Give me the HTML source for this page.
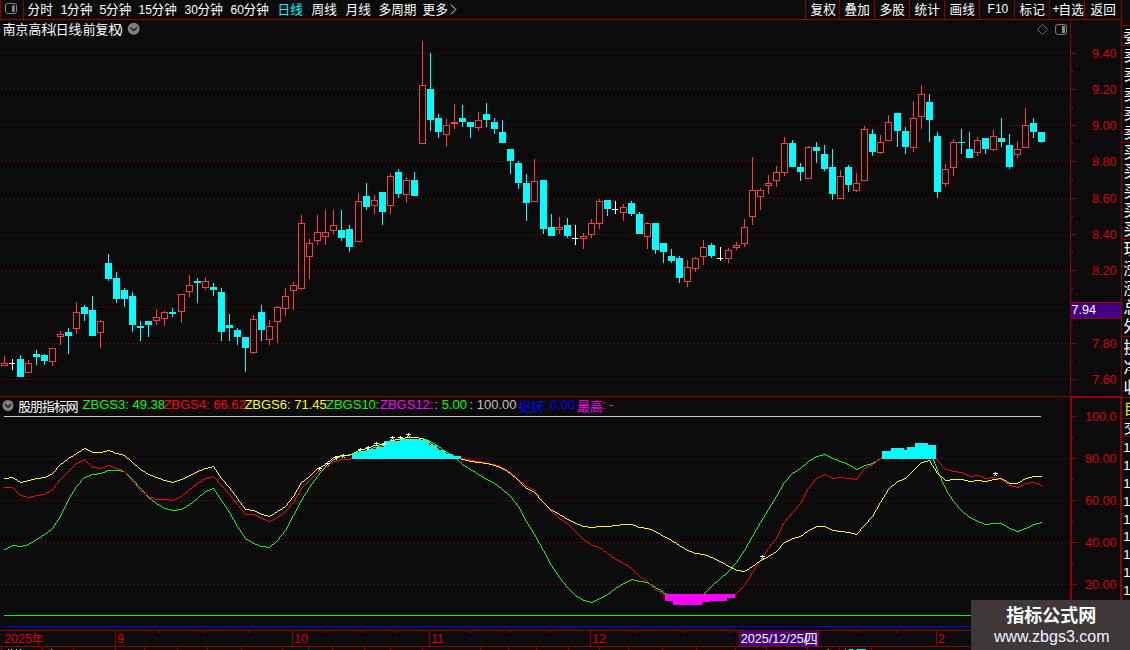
<!DOCTYPE html>
<html><head><meta charset="utf-8"><title>chart</title>
<style>
html,body{margin:0;padding:0;background:#0b0b0b;overflow:hidden}
body{width:1130px;height:650px;font-family:"Liberation Sans","Noto Sans CJK SC",sans-serif}
svg text{font-family:"Liberation Sans","Noto Sans CJK SC",sans-serif}
</style></head><body>
<svg width="1130" height="650" viewBox="0 0 1130 650" font-family="'Liberation Sans', 'Noto Sans CJK SC', sans-serif" style="display:block"><rect x="0" y="0" width="1130" height="650" fill="#0b0b0b"/>
<rect x="0" y="0" width="1" height="20" fill="#900000"/>
<rect x="0" y="19" width="1122" height="1" fill="#900000"/>
<rect x="23" y="0" width="1" height="20" fill="#900000"/>
<rect x="1070" y="20" width="1" height="630" fill="#900000"/>
<rect x="1121" y="0" width="1" height="650" fill="#900000"/>
<rect x="0" y="396" width="1122" height="1" fill="#900000"/>
<rect x="0" y="630" width="1122" height="1" fill="#900000"/>
<rect x="0" y="646" width="1122" height="1" fill="#900000"/>
<rect x="1070" y="396" width="52" height="2" fill="#900000"/>
<rect x="1070" y="396" width="2" height="235" fill="#900000"/>
<rect x="1120" y="396" width="2" height="235" fill="#900000"/>
<rect x="805" y="0" width="1" height="20" fill="#900000"/>
<rect x="839" y="0" width="1" height="20" fill="#900000"/>
<rect x="874" y="0" width="1" height="20" fill="#900000"/>
<rect x="909" y="0" width="1" height="20" fill="#900000"/>
<rect x="944" y="0" width="1" height="20" fill="#900000"/>
<rect x="979" y="0" width="1" height="20" fill="#900000"/>
<rect x="1014" y="0" width="1" height="20" fill="#900000"/>
<rect x="1049" y="0" width="1" height="20" fill="#900000"/>
<rect x="1084" y="0" width="1" height="20" fill="#900000"/>
<path d="M1 53.5H1066" stroke="#8c0000" stroke-width="1" stroke-dasharray="1 3" fill="none"/>
<path d="M1 89.5H1066" stroke="#8c0000" stroke-width="1" stroke-dasharray="1 3" fill="none"/>
<path d="M1 125.5H1066" stroke="#8c0000" stroke-width="1" stroke-dasharray="1 3" fill="none"/>
<path d="M1 161.5H1066" stroke="#8c0000" stroke-width="1" stroke-dasharray="1 3" fill="none"/>
<path d="M1 198.5H1066" stroke="#8c0000" stroke-width="1" stroke-dasharray="1 3" fill="none"/>
<path d="M1 234.5H1066" stroke="#8c0000" stroke-width="1" stroke-dasharray="1 3" fill="none"/>
<path d="M1 270.5H1066" stroke="#8c0000" stroke-width="1" stroke-dasharray="1 3" fill="none"/>
<path d="M1 307.5H1066" stroke="#8c0000" stroke-width="1" stroke-dasharray="1 3" fill="none"/>
<path d="M1 343.5H1066" stroke="#8c0000" stroke-width="1" stroke-dasharray="1 3" fill="none"/>
<path d="M1 379.5H1066" stroke="#8c0000" stroke-width="1" stroke-dasharray="1 3" fill="none"/>
<path d="M1 458.5H1066" stroke="#8c0000" stroke-width="1" stroke-dasharray="1 3" fill="none"/>
<path d="M1 500.5H1066" stroke="#8c0000" stroke-width="1" stroke-dasharray="1 3" fill="none"/>
<path d="M1 542.5H1066" stroke="#8c0000" stroke-width="1" stroke-dasharray="1 3" fill="none"/>
<path d="M1 584.5H1066" stroke="#8c0000" stroke-width="1" stroke-dasharray="1 3" fill="none"/>
<rect x="1071" y="53" width="5" height="1" fill="#900000"/>
<text x="1092" y="58.1" font-size="12.6" fill="#d80000">9.40</text>
<rect x="1071" y="89" width="5" height="1" fill="#900000"/>
<text x="1092" y="94.1" font-size="12.6" fill="#d80000">9.20</text>
<rect x="1071" y="125" width="5" height="1" fill="#900000"/>
<text x="1092" y="130.1" font-size="12.6" fill="#d80000">9.00</text>
<rect x="1071" y="161" width="5" height="1" fill="#900000"/>
<text x="1092" y="166.1" font-size="12.6" fill="#d80000">8.80</text>
<rect x="1071" y="198" width="5" height="1" fill="#900000"/>
<text x="1092" y="203.1" font-size="12.6" fill="#d80000">8.60</text>
<rect x="1071" y="234" width="5" height="1" fill="#900000"/>
<text x="1092" y="239.1" font-size="12.6" fill="#d80000">8.40</text>
<rect x="1071" y="270" width="5" height="1" fill="#900000"/>
<text x="1092" y="275.1" font-size="12.6" fill="#d80000">8.20</text>
<rect x="1071" y="307" width="5" height="1" fill="#900000"/>
<rect x="1071" y="343" width="5" height="1" fill="#900000"/>
<text x="1092" y="348.1" font-size="12.6" fill="#d80000">7.80</text>
<rect x="1071" y="379" width="5" height="1" fill="#900000"/>
<text x="1092" y="384.1" font-size="12.6" fill="#d80000">7.60</text>
<rect x="1071" y="71" width="2" height="1" fill="#900000"/>
<rect x="1071" y="107" width="2" height="1" fill="#900000"/>
<rect x="1071" y="143" width="2" height="1" fill="#900000"/>
<rect x="1071" y="179" width="2" height="1" fill="#900000"/>
<rect x="1071" y="216" width="2" height="1" fill="#900000"/>
<rect x="1071" y="252" width="2" height="1" fill="#900000"/>
<rect x="1071" y="288" width="2" height="1" fill="#900000"/>
<rect x="1071" y="325" width="2" height="1" fill="#900000"/>
<rect x="1071" y="361" width="2" height="1" fill="#900000"/>
<rect x="1072" y="416" width="5" height="1" fill="#900000"/>
<text x="1085" y="421.1" font-size="12.6" fill="#d80000">100.0</text>
<rect x="1072" y="458" width="5" height="1" fill="#900000"/>
<text x="1085" y="463.1" font-size="12.6" fill="#d80000">80.00</text>
<rect x="1072" y="500" width="5" height="1" fill="#900000"/>
<text x="1085" y="505.1" font-size="12.6" fill="#d80000">60.00</text>
<rect x="1072" y="542" width="5" height="1" fill="#900000"/>
<text x="1085" y="547.1" font-size="12.6" fill="#d80000">40.00</text>
<rect x="1072" y="584" width="5" height="1" fill="#900000"/>
<text x="1085" y="589.1" font-size="12.6" fill="#d80000">20.00</text>
<rect x="1072" y="437" width="2" height="1" fill="#900000"/>
<rect x="1072" y="479" width="2" height="1" fill="#900000"/>
<rect x="1072" y="521" width="2" height="1" fill="#900000"/>
<rect x="1072" y="563" width="2" height="1" fill="#900000"/>
<rect x="1072" y="605" width="2" height="1" fill="#900000"/>
<rect x="1071" y="302" width="50" height="1" fill="#900000"/>
<rect x="1071" y="318" width="50" height="1" fill="#900000"/>
<rect x="1071" y="303" width="50" height="15" fill="#440082"/>
<text x="1071.6" y="314.2" font-size="12.6" fill="#ffffff">7.94</text>
<g shape-rendering="crispEdges">
<rect x="4" y="356" width="1" height="7" fill="#ff3c3c"/>
<rect x="1.5" y="363.5" width="6" height="2" fill="none" stroke="#ff3c3c" stroke-width="1"/>
<rect x="12" y="359" width="1" height="11" fill="#ffffff"/>
<rect x="9" y="363" width="6" height="1" fill="#ffffff"/>
<rect x="20" y="355" width="1" height="4" fill="#00ffff"/>
<rect x="17" y="359" width="7" height="18" fill="#00ffff"/>
<rect x="28" y="360" width="1" height="3" fill="#ff3c3c"/>
<rect x="25.5" y="363.5" width="6" height="9" fill="none" stroke="#ff3c3c" stroke-width="1"/>
<rect x="36" y="350" width="1" height="4" fill="#00ffff"/>
<rect x="33" y="354" width="7" height="3" fill="#00ffff"/>
<rect x="36" y="357" width="1" height="8" fill="#00ffff"/>
<rect x="44" y="354" width="1" height="1" fill="#00ffff"/>
<rect x="41" y="355" width="7" height="6" fill="#00ffff"/>
<rect x="44" y="361" width="1" height="4" fill="#00ffff"/>
<rect x="52" y="362" width="1" height="4" fill="#ff3c3c"/>
<rect x="49.5" y="348.5" width="6" height="13" fill="none" stroke="#ff3c3c" stroke-width="1"/>
<rect x="60" y="331" width="1" height="3" fill="#ff3c3c"/>
<rect x="60" y="337" width="1" height="8" fill="#ff3c3c"/>
<rect x="57.5" y="334.5" width="6" height="2" fill="none" stroke="#ff3c3c" stroke-width="1"/>
<rect x="68" y="328" width="1" height="4" fill="#00ffff"/>
<rect x="65" y="332" width="7" height="4" fill="#00ffff"/>
<rect x="68" y="336" width="1" height="18" fill="#00ffff"/>
<rect x="76" y="302" width="1" height="10" fill="#ff3c3c"/>
<rect x="76" y="329" width="1" height="5" fill="#ff3c3c"/>
<rect x="73.5" y="312.5" width="6" height="16" fill="none" stroke="#ff3c3c" stroke-width="1"/>
<rect x="84" y="305" width="1" height="2" fill="#00ffff"/>
<rect x="81" y="307" width="7" height="7" fill="#00ffff"/>
<rect x="84" y="314" width="1" height="7" fill="#00ffff"/>
<rect x="92" y="296" width="1" height="14" fill="#00ffff"/>
<rect x="89" y="310" width="7" height="26" fill="#00ffff"/>
<rect x="100" y="320" width="1" height="1" fill="#ff3c3c"/>
<rect x="100" y="333" width="1" height="15" fill="#ff3c3c"/>
<rect x="97.5" y="321.5" width="6" height="11" fill="none" stroke="#ff3c3c" stroke-width="1"/>
<rect x="108" y="254" width="1" height="9" fill="#00ffff"/>
<rect x="105" y="263" width="7" height="16" fill="#00ffff"/>
<rect x="108" y="279" width="1" height="2" fill="#00ffff"/>
<rect x="116" y="272" width="1" height="6" fill="#00ffff"/>
<rect x="113" y="278" width="7" height="21" fill="#00ffff"/>
<rect x="116" y="299" width="1" height="4" fill="#00ffff"/>
<rect x="124" y="288" width="1" height="2" fill="#00ffff"/>
<rect x="121" y="290" width="7" height="9" fill="#00ffff"/>
<rect x="124" y="299" width="1" height="8" fill="#00ffff"/>
<rect x="132" y="292" width="1" height="4" fill="#00ffff"/>
<rect x="129" y="296" width="7" height="29" fill="#00ffff"/>
<rect x="132" y="325" width="1" height="7" fill="#00ffff"/>
<rect x="140" y="321" width="1" height="5" fill="#00ffff"/>
<rect x="137" y="326" width="7" height="2" fill="#00ffff"/>
<rect x="140" y="328" width="1" height="13" fill="#00ffff"/>
<rect x="145" y="321" width="7" height="4" fill="#00ffff"/>
<rect x="148" y="325" width="1" height="12" fill="#00ffff"/>
<rect x="156" y="309" width="1" height="8" fill="#ff3c3c"/>
<rect x="156" y="321" width="1" height="4" fill="#ff3c3c"/>
<rect x="153.5" y="317.5" width="6" height="3" fill="none" stroke="#ff3c3c" stroke-width="1"/>
<rect x="164" y="311" width="1" height="1" fill="#ff3c3c"/>
<rect x="164" y="319" width="1" height="7" fill="#ff3c3c"/>
<rect x="161.5" y="312.5" width="6" height="6" fill="none" stroke="#ff3c3c" stroke-width="1"/>
<rect x="172" y="308" width="1" height="4" fill="#00ffff"/>
<rect x="169" y="312" width="7" height="2" fill="#00ffff"/>
<rect x="172" y="314" width="1" height="3" fill="#00ffff"/>
<rect x="181" y="312" width="1" height="11" fill="#ff3c3c"/>
<rect x="178.5" y="294.5" width="6" height="17" fill="none" stroke="#ff3c3c" stroke-width="1"/>
<rect x="189" y="275" width="1" height="10" fill="#ff3c3c"/>
<rect x="189" y="292" width="1" height="5" fill="#ff3c3c"/>
<rect x="186.5" y="285.5" width="6" height="6" fill="none" stroke="#ff3c3c" stroke-width="1"/>
<rect x="197" y="278" width="1" height="3" fill="#00ffff"/>
<rect x="194" y="281" width="7" height="2" fill="#00ffff"/>
<rect x="197" y="283" width="1" height="20" fill="#00ffff"/>
<rect x="205" y="277" width="1" height="4" fill="#ff3c3c"/>
<rect x="205" y="288" width="1" height="2" fill="#ff3c3c"/>
<rect x="202.5" y="281.5" width="6" height="6" fill="none" stroke="#ff3c3c" stroke-width="1"/>
<rect x="213" y="283" width="1" height="4" fill="#00ffff"/>
<rect x="210" y="287" width="7" height="3" fill="#00ffff"/>
<rect x="213" y="290" width="1" height="6" fill="#00ffff"/>
<rect x="221" y="288" width="1" height="4" fill="#00ffff"/>
<rect x="218" y="292" width="7" height="40" fill="#00ffff"/>
<rect x="221" y="332" width="1" height="9" fill="#00ffff"/>
<rect x="229" y="314" width="1" height="11" fill="#00ffff"/>
<rect x="226" y="325" width="7" height="3" fill="#00ffff"/>
<rect x="229" y="328" width="1" height="13" fill="#00ffff"/>
<rect x="237" y="328" width="1" height="2" fill="#00ffff"/>
<rect x="234" y="330" width="7" height="7" fill="#00ffff"/>
<rect x="237" y="337" width="1" height="8" fill="#00ffff"/>
<rect x="242" y="337" width="7" height="11" fill="#00ffff"/>
<rect x="245" y="348" width="1" height="24" fill="#00ffff"/>
<rect x="253" y="315" width="1" height="4" fill="#ff3c3c"/>
<rect x="253" y="353" width="1" height="1" fill="#ff3c3c"/>
<rect x="250.5" y="319.5" width="6" height="33" fill="none" stroke="#ff3c3c" stroke-width="1"/>
<rect x="261" y="305" width="1" height="7" fill="#00ffff"/>
<rect x="258" y="312" width="7" height="18" fill="#00ffff"/>
<rect x="261" y="330" width="1" height="11" fill="#00ffff"/>
<rect x="269" y="320" width="1" height="6" fill="#ff3c3c"/>
<rect x="269" y="340" width="1" height="5" fill="#ff3c3c"/>
<rect x="266.5" y="326.5" width="6" height="13" fill="none" stroke="#ff3c3c" stroke-width="1"/>
<rect x="277" y="306" width="1" height="1" fill="#ff3c3c"/>
<rect x="277" y="322" width="1" height="21" fill="#ff3c3c"/>
<rect x="274.5" y="307.5" width="6" height="14" fill="none" stroke="#ff3c3c" stroke-width="1"/>
<rect x="285" y="288" width="1" height="8" fill="#ff3c3c"/>
<rect x="285" y="309" width="1" height="7" fill="#ff3c3c"/>
<rect x="282.5" y="296.5" width="6" height="12" fill="none" stroke="#ff3c3c" stroke-width="1"/>
<rect x="293" y="282" width="1" height="3" fill="#ff3c3c"/>
<rect x="293" y="291" width="1" height="19" fill="#ff3c3c"/>
<rect x="290.5" y="285.5" width="6" height="5" fill="none" stroke="#ff3c3c" stroke-width="1"/>
<rect x="301" y="215" width="1" height="8" fill="#ff3c3c"/>
<rect x="301" y="289" width="1" height="1" fill="#ff3c3c"/>
<rect x="298.5" y="223.5" width="6" height="65" fill="none" stroke="#ff3c3c" stroke-width="1"/>
<rect x="309" y="239" width="1" height="4" fill="#ff3c3c"/>
<rect x="309" y="257" width="1" height="22" fill="#ff3c3c"/>
<rect x="306.5" y="243.5" width="6" height="13" fill="none" stroke="#ff3c3c" stroke-width="1"/>
<rect x="317" y="215" width="1" height="17" fill="#ff3c3c"/>
<rect x="317" y="241" width="1" height="4" fill="#ff3c3c"/>
<rect x="314.5" y="232.5" width="6" height="8" fill="none" stroke="#ff3c3c" stroke-width="1"/>
<rect x="325" y="210" width="1" height="22" fill="#ff3c3c"/>
<rect x="325" y="237" width="1" height="8" fill="#ff3c3c"/>
<rect x="322.5" y="232.5" width="6" height="4" fill="none" stroke="#ff3c3c" stroke-width="1"/>
<rect x="333" y="210" width="1" height="15" fill="#ff3c3c"/>
<rect x="333" y="231" width="1" height="3" fill="#ff3c3c"/>
<rect x="330.5" y="225.5" width="6" height="5" fill="none" stroke="#ff3c3c" stroke-width="1"/>
<rect x="341" y="210" width="1" height="20" fill="#00ffff"/>
<rect x="338" y="230" width="7" height="8" fill="#00ffff"/>
<rect x="341" y="238" width="1" height="3" fill="#00ffff"/>
<rect x="349" y="225" width="1" height="4" fill="#00ffff"/>
<rect x="346" y="229" width="7" height="18" fill="#00ffff"/>
<rect x="349" y="247" width="1" height="5" fill="#00ffff"/>
<rect x="358" y="193" width="1" height="8" fill="#ff3c3c"/>
<rect x="355.5" y="201.5" width="6" height="40" fill="none" stroke="#ff3c3c" stroke-width="1"/>
<rect x="366" y="183" width="1" height="13" fill="#00ffff"/>
<rect x="363" y="196" width="7" height="11" fill="#00ffff"/>
<rect x="366" y="207" width="1" height="3" fill="#00ffff"/>
<rect x="374" y="195" width="1" height="5" fill="#ff3c3c"/>
<rect x="374" y="206" width="1" height="8" fill="#ff3c3c"/>
<rect x="371.5" y="200.5" width="6" height="5" fill="none" stroke="#ff3c3c" stroke-width="1"/>
<rect x="379" y="192" width="7" height="20" fill="#00ffff"/>
<rect x="382" y="212" width="1" height="13" fill="#00ffff"/>
<rect x="390" y="173" width="1" height="3" fill="#ff3c3c"/>
<rect x="390" y="206" width="1" height="8" fill="#ff3c3c"/>
<rect x="387.5" y="176.5" width="6" height="29" fill="none" stroke="#ff3c3c" stroke-width="1"/>
<rect x="398" y="169" width="1" height="3" fill="#00ffff"/>
<rect x="395" y="172" width="7" height="22" fill="#00ffff"/>
<rect x="398" y="194" width="1" height="4" fill="#00ffff"/>
<rect x="406" y="177" width="1" height="3" fill="#ff3c3c"/>
<rect x="406" y="195" width="1" height="8" fill="#ff3c3c"/>
<rect x="403.5" y="180.5" width="6" height="14" fill="none" stroke="#ff3c3c" stroke-width="1"/>
<rect x="414" y="172" width="1" height="8" fill="#00ffff"/>
<rect x="411" y="180" width="7" height="16" fill="#00ffff"/>
<rect x="422" y="41" width="1" height="44" fill="#ff3c3c"/>
<rect x="419.5" y="85.5" width="6" height="58" fill="none" stroke="#ff3c3c" stroke-width="1"/>
<rect x="430" y="53" width="1" height="36" fill="#00ffff"/>
<rect x="427" y="89" width="7" height="31" fill="#00ffff"/>
<rect x="430" y="120" width="1" height="11" fill="#00ffff"/>
<rect x="438" y="114" width="1" height="4" fill="#00ffff"/>
<rect x="435" y="118" width="7" height="14" fill="#00ffff"/>
<rect x="438" y="132" width="1" height="6" fill="#00ffff"/>
<rect x="446" y="119" width="1" height="6" fill="#ff3c3c"/>
<rect x="446" y="135" width="1" height="12" fill="#ff3c3c"/>
<rect x="443.5" y="125.5" width="6" height="9" fill="none" stroke="#ff3c3c" stroke-width="1"/>
<rect x="454" y="104" width="1" height="18" fill="#ff3c3c"/>
<rect x="454" y="124" width="1" height="5" fill="#ff3c3c"/>
<rect x="451" y="122" width="7" height="2" fill="#ff3c3c"/>
<rect x="462" y="105" width="1" height="13" fill="#00ffff"/>
<rect x="459" y="118" width="7" height="4" fill="#00ffff"/>
<rect x="462" y="122" width="1" height="5" fill="#00ffff"/>
<rect x="467" y="122" width="7" height="5" fill="#00ffff"/>
<rect x="470" y="127" width="1" height="11" fill="#00ffff"/>
<rect x="478" y="112" width="1" height="8" fill="#ff3c3c"/>
<rect x="478" y="128" width="1" height="3" fill="#ff3c3c"/>
<rect x="475.5" y="120.5" width="6" height="7" fill="none" stroke="#ff3c3c" stroke-width="1"/>
<rect x="486" y="103" width="1" height="11" fill="#00ffff"/>
<rect x="483" y="114" width="7" height="6" fill="#00ffff"/>
<rect x="486" y="120" width="1" height="7" fill="#00ffff"/>
<rect x="494" y="118" width="1" height="4" fill="#00ffff"/>
<rect x="491" y="122" width="7" height="7" fill="#00ffff"/>
<rect x="494" y="129" width="1" height="5" fill="#00ffff"/>
<rect x="502" y="120" width="1" height="12" fill="#00ffff"/>
<rect x="499" y="132" width="7" height="11" fill="#00ffff"/>
<rect x="507" y="149" width="7" height="12" fill="#00ffff"/>
<rect x="510" y="161" width="1" height="13" fill="#00ffff"/>
<rect x="518" y="161" width="1" height="2" fill="#00ffff"/>
<rect x="515" y="163" width="7" height="20" fill="#00ffff"/>
<rect x="518" y="183" width="1" height="6" fill="#00ffff"/>
<rect x="526" y="174" width="1" height="9" fill="#00ffff"/>
<rect x="523" y="183" width="7" height="20" fill="#00ffff"/>
<rect x="526" y="203" width="1" height="18" fill="#00ffff"/>
<rect x="534" y="159" width="1" height="22" fill="#ff3c3c"/>
<rect x="531.5" y="181.5" width="6" height="20" fill="none" stroke="#ff3c3c" stroke-width="1"/>
<rect x="540" y="180" width="7" height="49" fill="#00ffff"/>
<rect x="543" y="229" width="1" height="5" fill="#00ffff"/>
<rect x="551" y="214" width="1" height="13" fill="#00ffff"/>
<rect x="548" y="227" width="7" height="9" fill="#00ffff"/>
<rect x="559" y="217" width="1" height="10" fill="#ff3c3c"/>
<rect x="559" y="230" width="1" height="4" fill="#ff3c3c"/>
<rect x="556.5" y="227.5" width="6" height="2" fill="none" stroke="#ff3c3c" stroke-width="1"/>
<rect x="567" y="218" width="1" height="7" fill="#00ffff"/>
<rect x="564" y="225" width="7" height="11" fill="#00ffff"/>
<rect x="567" y="236" width="1" height="2" fill="#00ffff"/>
<rect x="575" y="225" width="1" height="20" fill="#ffffff"/>
<rect x="572" y="238" width="6" height="1" fill="#ffffff"/>
<rect x="583" y="233" width="1" height="3" fill="#ff3c3c"/>
<rect x="583" y="239" width="1" height="10" fill="#ff3c3c"/>
<rect x="580.5" y="236.5" width="6" height="2" fill="none" stroke="#ff3c3c" stroke-width="1"/>
<rect x="591" y="219" width="1" height="4" fill="#ff3c3c"/>
<rect x="591" y="235" width="1" height="3" fill="#ff3c3c"/>
<rect x="588.5" y="223.5" width="6" height="11" fill="none" stroke="#ff3c3c" stroke-width="1"/>
<rect x="599" y="199" width="1" height="2" fill="#ff3c3c"/>
<rect x="599" y="224" width="1" height="5" fill="#ff3c3c"/>
<rect x="596.5" y="201.5" width="6" height="22" fill="none" stroke="#ff3c3c" stroke-width="1"/>
<rect x="604" y="200" width="7" height="9" fill="#00ffff"/>
<rect x="607" y="209" width="1" height="7" fill="#00ffff"/>
<rect x="615" y="201" width="1" height="13" fill="#ffffff"/>
<rect x="612" y="209" width="6" height="1" fill="#ffffff"/>
<rect x="623" y="204" width="1" height="3" fill="#ff3c3c"/>
<rect x="623" y="213" width="1" height="8" fill="#ff3c3c"/>
<rect x="620.5" y="207.5" width="6" height="5" fill="none" stroke="#ff3c3c" stroke-width="1"/>
<rect x="631" y="201" width="1" height="2" fill="#00ffff"/>
<rect x="628" y="203" width="7" height="11" fill="#00ffff"/>
<rect x="631" y="214" width="1" height="2" fill="#00ffff"/>
<rect x="639" y="212" width="1" height="2" fill="#00ffff"/>
<rect x="636" y="214" width="7" height="20" fill="#00ffff"/>
<rect x="647" y="222" width="1" height="1" fill="#ff3c3c"/>
<rect x="647" y="237" width="1" height="12" fill="#ff3c3c"/>
<rect x="644.5" y="223.5" width="6" height="13" fill="none" stroke="#ff3c3c" stroke-width="1"/>
<rect x="652" y="223" width="7" height="27" fill="#00ffff"/>
<rect x="655" y="250" width="1" height="4" fill="#00ffff"/>
<rect x="660" y="243" width="7" height="9" fill="#00ffff"/>
<rect x="663" y="252" width="1" height="11" fill="#00ffff"/>
<rect x="671" y="249" width="1" height="7" fill="#00ffff"/>
<rect x="668" y="256" width="7" height="5" fill="#00ffff"/>
<rect x="671" y="261" width="1" height="2" fill="#00ffff"/>
<rect x="679" y="256" width="1" height="2" fill="#00ffff"/>
<rect x="676" y="258" width="7" height="20" fill="#00ffff"/>
<rect x="679" y="278" width="1" height="5" fill="#00ffff"/>
<rect x="687" y="260" width="1" height="7" fill="#ff3c3c"/>
<rect x="687" y="282" width="1" height="5" fill="#ff3c3c"/>
<rect x="684.5" y="267.5" width="6" height="14" fill="none" stroke="#ff3c3c" stroke-width="1"/>
<rect x="695" y="257" width="1" height="1" fill="#ff3c3c"/>
<rect x="695" y="269" width="1" height="3" fill="#ff3c3c"/>
<rect x="692.5" y="258.5" width="6" height="10" fill="none" stroke="#ff3c3c" stroke-width="1"/>
<rect x="703" y="240" width="1" height="7" fill="#ff3c3c"/>
<rect x="703" y="257" width="1" height="8" fill="#ff3c3c"/>
<rect x="700.5" y="247.5" width="6" height="9" fill="none" stroke="#ff3c3c" stroke-width="1"/>
<rect x="711" y="243" width="1" height="2" fill="#00ffff"/>
<rect x="708" y="245" width="7" height="11" fill="#00ffff"/>
<rect x="711" y="256" width="1" height="2" fill="#00ffff"/>
<rect x="720" y="247" width="1" height="14" fill="#ffffff"/>
<rect x="717" y="258" width="6" height="1" fill="#ffffff"/>
<rect x="728" y="248" width="1" height="2" fill="#ff3c3c"/>
<rect x="728" y="259" width="1" height="4" fill="#ff3c3c"/>
<rect x="725.5" y="250.5" width="6" height="8" fill="none" stroke="#ff3c3c" stroke-width="1"/>
<rect x="736" y="242" width="1" height="3" fill="#ff3c3c"/>
<rect x="736" y="248" width="1" height="2" fill="#ff3c3c"/>
<rect x="733.5" y="245.5" width="6" height="2" fill="none" stroke="#ff3c3c" stroke-width="1"/>
<rect x="744" y="219" width="1" height="8" fill="#ff3c3c"/>
<rect x="744" y="244" width="1" height="3" fill="#ff3c3c"/>
<rect x="741.5" y="227.5" width="6" height="16" fill="none" stroke="#ff3c3c" stroke-width="1"/>
<rect x="752" y="157" width="1" height="33" fill="#ff3c3c"/>
<rect x="752" y="217" width="1" height="8" fill="#ff3c3c"/>
<rect x="749.5" y="190.5" width="6" height="26" fill="none" stroke="#ff3c3c" stroke-width="1"/>
<rect x="760" y="188" width="1" height="2" fill="#ff3c3c"/>
<rect x="760" y="197" width="1" height="13" fill="#ff3c3c"/>
<rect x="757.5" y="190.5" width="6" height="6" fill="none" stroke="#ff3c3c" stroke-width="1"/>
<rect x="768" y="175" width="1" height="8" fill="#ff3c3c"/>
<rect x="768" y="186" width="1" height="8" fill="#ff3c3c"/>
<rect x="765.5" y="183.5" width="6" height="2" fill="none" stroke="#ff3c3c" stroke-width="1"/>
<rect x="776" y="166" width="1" height="6" fill="#ff3c3c"/>
<rect x="776" y="181" width="1" height="6" fill="#ff3c3c"/>
<rect x="773.5" y="172.5" width="6" height="8" fill="none" stroke="#ff3c3c" stroke-width="1"/>
<rect x="784" y="137" width="1" height="6" fill="#ff3c3c"/>
<rect x="784" y="173" width="1" height="3" fill="#ff3c3c"/>
<rect x="781.5" y="143.5" width="6" height="29" fill="none" stroke="#ff3c3c" stroke-width="1"/>
<rect x="792" y="140" width="1" height="3" fill="#00ffff"/>
<rect x="789" y="143" width="7" height="24" fill="#00ffff"/>
<rect x="800" y="163" width="1" height="4" fill="#00ffff"/>
<rect x="797" y="167" width="7" height="5" fill="#00ffff"/>
<rect x="800" y="172" width="1" height="9" fill="#00ffff"/>
<rect x="808" y="146" width="1" height="1" fill="#ff3c3c"/>
<rect x="805.5" y="147.5" width="6" height="31" fill="none" stroke="#ff3c3c" stroke-width="1"/>
<rect x="816" y="142" width="1" height="5" fill="#00ffff"/>
<rect x="813" y="147" width="7" height="4" fill="#00ffff"/>
<rect x="816" y="151" width="1" height="12" fill="#00ffff"/>
<rect x="824" y="145" width="1" height="9" fill="#00ffff"/>
<rect x="821" y="154" width="7" height="15" fill="#00ffff"/>
<rect x="824" y="169" width="1" height="2" fill="#00ffff"/>
<rect x="832" y="149" width="1" height="18" fill="#00ffff"/>
<rect x="829" y="167" width="7" height="27" fill="#00ffff"/>
<rect x="832" y="194" width="1" height="6" fill="#00ffff"/>
<rect x="840" y="170" width="1" height="6" fill="#ff3c3c"/>
<rect x="837.5" y="176.5" width="6" height="22" fill="none" stroke="#ff3c3c" stroke-width="1"/>
<rect x="848" y="165" width="1" height="2" fill="#00ffff"/>
<rect x="845" y="167" width="7" height="18" fill="#00ffff"/>
<rect x="848" y="185" width="1" height="7" fill="#00ffff"/>
<rect x="856" y="173" width="1" height="10" fill="#ff3c3c"/>
<rect x="856" y="191" width="1" height="1" fill="#ff3c3c"/>
<rect x="853.5" y="183.5" width="6" height="7" fill="none" stroke="#ff3c3c" stroke-width="1"/>
<rect x="864" y="126" width="1" height="3" fill="#ff3c3c"/>
<rect x="861.5" y="129.5" width="6" height="51" fill="none" stroke="#ff3c3c" stroke-width="1"/>
<rect x="872" y="129" width="1" height="5" fill="#00ffff"/>
<rect x="869" y="134" width="7" height="18" fill="#00ffff"/>
<rect x="872" y="152" width="1" height="4" fill="#00ffff"/>
<rect x="880" y="135" width="1" height="7" fill="#ff3c3c"/>
<rect x="880" y="153" width="1" height="1" fill="#ff3c3c"/>
<rect x="877.5" y="142.5" width="6" height="10" fill="none" stroke="#ff3c3c" stroke-width="1"/>
<rect x="888" y="115" width="1" height="7" fill="#ff3c3c"/>
<rect x="885.5" y="122.5" width="6" height="18" fill="none" stroke="#ff3c3c" stroke-width="1"/>
<rect x="894" y="113" width="7" height="18" fill="#00ffff"/>
<rect x="897" y="131" width="1" height="16" fill="#00ffff"/>
<rect x="905" y="127" width="1" height="4" fill="#00ffff"/>
<rect x="902" y="131" width="7" height="16" fill="#00ffff"/>
<rect x="905" y="147" width="1" height="7" fill="#00ffff"/>
<rect x="913" y="101" width="1" height="17" fill="#ff3c3c"/>
<rect x="913" y="148" width="1" height="4" fill="#ff3c3c"/>
<rect x="910.5" y="118.5" width="6" height="29" fill="none" stroke="#ff3c3c" stroke-width="1"/>
<rect x="921" y="85" width="1" height="9" fill="#ff3c3c"/>
<rect x="921" y="117" width="1" height="12" fill="#ff3c3c"/>
<rect x="918.5" y="94.5" width="6" height="22" fill="none" stroke="#ff3c3c" stroke-width="1"/>
<rect x="929" y="94" width="1" height="8" fill="#00ffff"/>
<rect x="926" y="102" width="7" height="18" fill="#00ffff"/>
<rect x="929" y="120" width="1" height="22" fill="#00ffff"/>
<rect x="937" y="132" width="1" height="4" fill="#00ffff"/>
<rect x="934" y="136" width="7" height="56" fill="#00ffff"/>
<rect x="937" y="192" width="1" height="6" fill="#00ffff"/>
<rect x="945" y="164" width="1" height="5" fill="#ff3c3c"/>
<rect x="945" y="184" width="1" height="3" fill="#ff3c3c"/>
<rect x="942.5" y="169.5" width="6" height="14" fill="none" stroke="#ff3c3c" stroke-width="1"/>
<rect x="953" y="139" width="1" height="3" fill="#ff3c3c"/>
<rect x="953" y="168" width="1" height="8" fill="#ff3c3c"/>
<rect x="950.5" y="142.5" width="6" height="25" fill="none" stroke="#ff3c3c" stroke-width="1"/>
<rect x="961" y="129" width="1" height="13" fill="#00ffff"/>
<rect x="958" y="142" width="7" height="1" fill="#00ffff"/>
<rect x="961" y="143" width="1" height="11" fill="#00ffff"/>
<rect x="969" y="132" width="1" height="17" fill="#00ffff"/>
<rect x="966" y="149" width="7" height="9" fill="#00ffff"/>
<rect x="977" y="137" width="1" height="3" fill="#ff3c3c"/>
<rect x="977" y="153" width="1" height="3" fill="#ff3c3c"/>
<rect x="974.5" y="140.5" width="6" height="12" fill="none" stroke="#ff3c3c" stroke-width="1"/>
<rect x="982" y="138" width="7" height="11" fill="#00ffff"/>
<rect x="985" y="149" width="1" height="5" fill="#00ffff"/>
<rect x="993" y="130" width="1" height="6" fill="#ff3c3c"/>
<rect x="993" y="150" width="1" height="1" fill="#ff3c3c"/>
<rect x="990.5" y="136.5" width="6" height="13" fill="none" stroke="#ff3c3c" stroke-width="1"/>
<rect x="1001" y="118" width="1" height="20" fill="#00ffff"/>
<rect x="998" y="138" width="7" height="4" fill="#00ffff"/>
<rect x="1001" y="142" width="1" height="5" fill="#00ffff"/>
<rect x="1009" y="134" width="1" height="11" fill="#00ffff"/>
<rect x="1006" y="145" width="7" height="22" fill="#00ffff"/>
<rect x="1009" y="167" width="1" height="2" fill="#00ffff"/>
<rect x="1017" y="141" width="1" height="8" fill="#ff3c3c"/>
<rect x="1017" y="155" width="1" height="3" fill="#ff3c3c"/>
<rect x="1014.5" y="149.5" width="6" height="5" fill="none" stroke="#ff3c3c" stroke-width="1"/>
<rect x="1025" y="108" width="1" height="17" fill="#ff3c3c"/>
<rect x="1022.5" y="125.5" width="6" height="22" fill="none" stroke="#ff3c3c" stroke-width="1"/>
<rect x="1033" y="118" width="1" height="5" fill="#00ffff"/>
<rect x="1030" y="123" width="7" height="9" fill="#00ffff"/>
<rect x="1033" y="132" width="1" height="6" fill="#00ffff"/>
<rect x="1038" y="132" width="7" height="10" fill="#00ffff"/>
<rect x="1041" y="142" width="1" height="1" fill="#00ffff"/>
</g>
<g shape-rendering="crispEdges">
<rect x="4" y="416" width="1037" height="1" fill="#c8c8c8"/>
<path d="M405 437.5h14M401 438.5h4M419 438.5h5M395 439.5h6M424 439.5h3M390 440.5h5M427 440.5h2M388 441.5h2M429 441.5h2M387 442.5h1M431 442.5h2M385 443.5h2M433 443.5h2M383 444.5h2M435 444.5h1M920 444.5h3M381 445.5h2M436 445.5h2M918 445.5h2M923 445.5h2M377 446.5h4M438 446.5h1M915 446.5h3M925 446.5h2M373 447.5h4M439 447.5h2M912 447.5h3M927 447.5h2M371 448.5h2M441 448.5h1M910 448.5h2M929 448.5h1M368 449.5h3M442 449.5h1M896 449.5h6M907 449.5h3M929 449.5h1M365 450.5h3M443 450.5h2M893 450.5h3M902 450.5h5M930 450.5h1M361 451.5h4M445 451.5h1M890 451.5h3M930 451.5h1M356 452.5h5M446 452.5h2M888 452.5h2M930 452.5h1M352 453.5h4M448 453.5h2M887 453.5h1M931 453.5h1M348 454.5h4M450 454.5h2M823 454.5h3M885 454.5h2M931 454.5h1M344 455.5h4M452 455.5h2M819 455.5h4M826 455.5h2M884 455.5h1M932 455.5h1M340 456.5h4M454 456.5h1M816 456.5h3M828 456.5h2M883 456.5h1M932 456.5h1M338 457.5h2M455 457.5h1M814 457.5h2M830 457.5h2M881 457.5h2M932 457.5h1M335 458.5h3M456 458.5h1M813 458.5h1M832 458.5h2M880 458.5h1M933 458.5h1M333 459.5h2M457 459.5h1M811 459.5h2M834 459.5h3M878 459.5h2M933 459.5h1M332 460.5h1M458 460.5h1M809 460.5h2M837 460.5h2M877 460.5h1M933 460.5h1M331 461.5h1M459 461.5h1M808 461.5h1M839 461.5h3M875 461.5h2M934 461.5h1M330 462.5h1M460 462.5h1M807 462.5h1M842 462.5h3M873 462.5h2M934 462.5h1M328 463.5h2M461 463.5h1M806 463.5h1M845 463.5h2M871 463.5h2M934 463.5h1M327 464.5h1M462 464.5h1M805 464.5h1M847 464.5h2M867 464.5h4M935 464.5h1M326 465.5h1M463 465.5h2M803 465.5h2M849 465.5h2M864 465.5h3M935 465.5h1M325 466.5h1M465 466.5h2M802 466.5h1M851 466.5h2M862 466.5h2M936 466.5h1M324 467.5h1M467 467.5h1M801 467.5h1M853 467.5h1M860 467.5h2M936 467.5h1M323 468.5h1M468 468.5h2M800 468.5h1M854 468.5h2M858 468.5h2M936 468.5h1M323 469.5h1M470 469.5h1M798 469.5h2M856 469.5h2M937 469.5h1M107 470.5h14M322 470.5h1M471 470.5h2M797 470.5h1M937 470.5h1M105 471.5h2M121 471.5h4M321 471.5h1M473 471.5h2M795 471.5h2M937 471.5h1M102 472.5h3M125 472.5h1M320 472.5h1M475 472.5h1M793 472.5h2M938 472.5h1M97 473.5h5M126 473.5h1M319 473.5h1M476 473.5h2M792 473.5h1M938 473.5h1M91 474.5h6M127 474.5h1M319 474.5h1M478 474.5h1M791 474.5h1M939 474.5h1M89 475.5h2M128 475.5h1M318 475.5h1M479 475.5h2M790 475.5h1M939 475.5h1M86 476.5h3M129 476.5h1M317 476.5h1M481 476.5h2M789 476.5h1M940 476.5h1M84 477.5h2M130 477.5h1M316 477.5h1M483 477.5h1M788 477.5h1M940 477.5h1M83 478.5h1M131 478.5h1M316 478.5h1M484 478.5h2M788 478.5h1M941 478.5h1M82 479.5h1M132 479.5h1M315 479.5h1M486 479.5h2M787 479.5h1M941 479.5h1M81 480.5h1M133 480.5h1M314 480.5h1M488 480.5h2M786 480.5h1M941 480.5h1M80 481.5h1M134 481.5h1M313 481.5h1M490 481.5h2M785 481.5h1M942 481.5h1M80 482.5h1M135 482.5h1M313 482.5h1M492 482.5h2M784 482.5h1M942 482.5h1M79 483.5h1M136 483.5h1M312 483.5h1M494 483.5h1M783 483.5h1M943 483.5h1M78 484.5h1M136 484.5h1M311 484.5h1M495 484.5h2M783 484.5h1M943 484.5h1M77 485.5h1M137 485.5h1M310 485.5h1M497 485.5h1M782 485.5h1M944 485.5h1M76 486.5h1M138 486.5h1M310 486.5h1M498 486.5h1M782 486.5h1M944 486.5h1M75 487.5h1M139 487.5h1M309 487.5h1M499 487.5h2M781 487.5h1M945 487.5h1M75 488.5h1M140 488.5h1M212 488.5h2M308 488.5h1M501 488.5h1M781 488.5h1M945 488.5h1M74 489.5h1M141 489.5h1M210 489.5h2M214 489.5h1M308 489.5h1M502 489.5h1M780 489.5h1M946 489.5h1M74 490.5h1M142 490.5h1M207 490.5h3M214 490.5h1M307 490.5h1M503 490.5h1M779 490.5h1M946 490.5h1M73 491.5h1M143 491.5h1M205 491.5h2M215 491.5h1M307 491.5h1M504 491.5h1M779 491.5h1M947 491.5h1M72 492.5h1M144 492.5h1M204 492.5h1M216 492.5h1M306 492.5h1M505 492.5h2M778 492.5h1M947 492.5h1M72 493.5h1M144 493.5h1M203 493.5h1M216 493.5h1M305 493.5h1M507 493.5h1M778 493.5h1M948 493.5h1M71 494.5h1M145 494.5h1M202 494.5h1M217 494.5h1M305 494.5h1M508 494.5h1M777 494.5h1M949 494.5h1M70 495.5h1M146 495.5h1M200 495.5h2M218 495.5h1M304 495.5h1M509 495.5h1M777 495.5h1M949 495.5h1M70 496.5h1M147 496.5h1M199 496.5h1M218 496.5h1M303 496.5h1M510 496.5h1M776 496.5h1M950 496.5h1M69 497.5h1M148 497.5h1M198 497.5h1M219 497.5h1M303 497.5h1M511 497.5h1M775 497.5h1M951 497.5h1M69 498.5h1M149 498.5h2M197 498.5h1M220 498.5h1M302 498.5h1M512 498.5h1M775 498.5h1M951 498.5h1M68 499.5h1M151 499.5h1M196 499.5h1M220 499.5h1M302 499.5h1M512 499.5h1M774 499.5h1M952 499.5h1M68 500.5h1M152 500.5h1M194 500.5h2M221 500.5h1M301 500.5h1M513 500.5h1M774 500.5h1M952 500.5h1M67 501.5h1M153 501.5h2M193 501.5h1M222 501.5h1M300 501.5h1M514 501.5h1M773 501.5h1M953 501.5h1M67 502.5h1M155 502.5h1M192 502.5h1M222 502.5h1M300 502.5h1M515 502.5h1M772 502.5h1M954 502.5h1M66 503.5h1M156 503.5h1M190 503.5h2M223 503.5h1M299 503.5h1M516 503.5h1M772 503.5h1M955 503.5h1M66 504.5h1M157 504.5h2M189 504.5h1M224 504.5h1M299 504.5h1M516 504.5h1M771 504.5h1M956 504.5h1M65 505.5h1M159 505.5h2M187 505.5h2M224 505.5h1M298 505.5h1M517 505.5h1M770 505.5h1M957 505.5h1M65 506.5h1M161 506.5h1M186 506.5h1M225 506.5h1M298 506.5h1M518 506.5h1M770 506.5h1M957 506.5h1M64 507.5h1M162 507.5h2M184 507.5h2M226 507.5h1M297 507.5h1M519 507.5h1M769 507.5h1M958 507.5h1M64 508.5h1M164 508.5h3M182 508.5h2M226 508.5h1M297 508.5h1M519 508.5h1M769 508.5h1M959 508.5h1M63 509.5h1M167 509.5h4M177 509.5h5M227 509.5h1M296 509.5h1M520 509.5h1M768 509.5h1M960 509.5h1M63 510.5h1M171 510.5h6M228 510.5h1M296 510.5h1M520 510.5h1M767 510.5h1M961 510.5h1M62 511.5h1M228 511.5h1M295 511.5h1M521 511.5h1M767 511.5h1M962 511.5h1M62 512.5h1M229 512.5h1M295 512.5h1M521 512.5h1M766 512.5h1M963 512.5h1M61 513.5h1M230 513.5h1M294 513.5h1M522 513.5h1M766 513.5h1M964 513.5h2M61 514.5h1M230 514.5h1M294 514.5h1M522 514.5h1M765 514.5h1M966 514.5h1M60 515.5h1M231 515.5h1M293 515.5h1M523 515.5h1M764 515.5h1M967 515.5h1M60 516.5h1M231 516.5h1M292 516.5h1M523 516.5h1M764 516.5h1M968 516.5h1M59 517.5h1M232 517.5h1M292 517.5h1M524 517.5h1M763 517.5h1M969 517.5h2M59 518.5h1M232 518.5h1M291 518.5h1M524 518.5h1M762 518.5h1M971 518.5h2M58 519.5h1M233 519.5h1M291 519.5h1M525 519.5h1M762 519.5h1M973 519.5h2M57 520.5h1M234 520.5h1M290 520.5h1M525 520.5h1M761 520.5h1M975 520.5h2M57 521.5h1M234 521.5h1M290 521.5h1M526 521.5h1M761 521.5h1M977 521.5h2M56 522.5h1M235 522.5h1M289 522.5h1M527 522.5h1M760 522.5h1M979 522.5h3M1040 522.5h2M55 523.5h1M235 523.5h1M289 523.5h1M527 523.5h1M759 523.5h1M982 523.5h2M990 523.5h12M1036 523.5h4M55 524.5h1M236 524.5h1M288 524.5h1M528 524.5h1M759 524.5h1M984 524.5h6M1002 524.5h2M1033 524.5h3M54 525.5h1M236 525.5h1M288 525.5h1M528 525.5h1M758 525.5h1M1004 525.5h2M1031 525.5h2M53 526.5h1M237 526.5h1M287 526.5h1M529 526.5h1M758 526.5h1M1006 526.5h1M1029 526.5h2M53 527.5h1M238 527.5h1M287 527.5h1M530 527.5h1M757 527.5h1M1007 527.5h2M1027 527.5h2M52 528.5h1M238 528.5h1M286 528.5h1M530 528.5h1M757 528.5h1M1009 528.5h2M1024 528.5h3M51 529.5h1M239 529.5h1M286 529.5h1M531 529.5h1M756 529.5h1M1011 529.5h3M1022 529.5h2M49 530.5h2M240 530.5h1M285 530.5h1M532 530.5h1M755 530.5h1M1014 530.5h2M1019 530.5h3M48 531.5h1M240 531.5h1M284 531.5h1M532 531.5h1M755 531.5h1M1016 531.5h3M47 532.5h1M241 532.5h1M283 532.5h1M533 532.5h1M754 532.5h1M45 533.5h2M242 533.5h1M283 533.5h1M533 533.5h1M754 533.5h1M44 534.5h1M242 534.5h1M282 534.5h1M534 534.5h1M753 534.5h1M42 535.5h2M243 535.5h1M281 535.5h1M535 535.5h1M753 535.5h1M41 536.5h1M244 536.5h1M280 536.5h1M535 536.5h1M752 536.5h1M39 537.5h2M244 537.5h1M279 537.5h1M536 537.5h1M751 537.5h1M37 538.5h2M245 538.5h1M279 538.5h1M536 538.5h1M751 538.5h1M36 539.5h1M246 539.5h2M278 539.5h1M537 539.5h1M750 539.5h1M34 540.5h2M248 540.5h2M277 540.5h1M537 540.5h1M750 540.5h1M33 541.5h1M250 541.5h1M276 541.5h1M538 541.5h1M749 541.5h1M31 542.5h2M251 542.5h2M275 542.5h1M538 542.5h1M749 542.5h1M29 543.5h2M253 543.5h2M274 543.5h1M539 543.5h1M748 543.5h1M27 544.5h2M255 544.5h3M272 544.5h2M540 544.5h1M747 544.5h1M12 545.5h5M23 545.5h4M258 545.5h2M271 545.5h1M540 545.5h1M747 545.5h1M10 546.5h2M17 546.5h6M260 546.5h6M270 546.5h1M541 546.5h1M746 546.5h1M8 547.5h2M266 547.5h4M541 547.5h1M746 547.5h1M6 548.5h2M542 548.5h1M745 548.5h1M4 549.5h2M542 549.5h1M745 549.5h1M543 550.5h1M744 550.5h1M544 551.5h1M743 551.5h1M544 552.5h1M743 552.5h1M545 553.5h1M742 553.5h1M545 554.5h1M741 554.5h1M546 555.5h1M741 555.5h1M546 556.5h1M740 556.5h1M547 557.5h1M739 557.5h1M547 558.5h1M739 558.5h1M548 559.5h1M738 559.5h1M548 560.5h1M737 560.5h1M549 561.5h1M737 561.5h1M549 562.5h1M736 562.5h1M550 563.5h1M735 563.5h1M550 564.5h1M734 564.5h1M551 565.5h1M733 565.5h1M552 566.5h1M732 566.5h1M552 567.5h1M732 567.5h1M553 568.5h1M731 568.5h1M554 569.5h1M730 569.5h1M554 570.5h1M729 570.5h1M555 571.5h1M728 571.5h1M556 572.5h1M727 572.5h1M556 573.5h1M726 573.5h1M557 574.5h1M725 574.5h1M558 575.5h1M723 575.5h2M558 576.5h1M722 576.5h1M559 577.5h1M721 577.5h1M560 578.5h1M720 578.5h1M561 579.5h1M631 579.5h3M719 579.5h1M561 580.5h1M629 580.5h2M634 580.5h4M718 580.5h1M562 581.5h1M627 581.5h2M638 581.5h6M717 581.5h1M563 582.5h1M625 582.5h2M644 582.5h4M715 582.5h2M564 583.5h1M623 583.5h2M648 583.5h2M714 583.5h1M565 584.5h1M621 584.5h2M650 584.5h2M713 584.5h1M565 585.5h1M620 585.5h1M652 585.5h1M712 585.5h1M566 586.5h1M618 586.5h2M653 586.5h2M711 586.5h1M567 587.5h1M616 587.5h2M655 587.5h1M710 587.5h1M568 588.5h1M615 588.5h1M656 588.5h2M709 588.5h1M569 589.5h1M614 589.5h1M658 589.5h2M708 589.5h1M570 590.5h1M612 590.5h2M660 590.5h1M707 590.5h1M571 591.5h1M611 591.5h1M661 591.5h2M706 591.5h1M572 592.5h1M610 592.5h1M663 592.5h1M705 592.5h1M573 593.5h1M608 593.5h2M664 593.5h2M704 593.5h1M574 594.5h1M607 594.5h1M666 594.5h2M702 594.5h2M575 595.5h1M605 595.5h2M668 595.5h1M700 595.5h2M576 596.5h2M603 596.5h2M669 596.5h2M697 596.5h3M578 597.5h2M601 597.5h2M671 597.5h5M692 597.5h5M580 598.5h1M599 598.5h2M676 598.5h16M581 599.5h2M597 599.5h2M583 600.5h3M595 600.5h2M586 601.5h4M593 601.5h2M590 602.5h3" fill="none" stroke="#00ff00" stroke-width="1"/>
<path d="M405 439.5h14M401 440.5h4M419 440.5h4M390 441.5h11M423 441.5h2M389 442.5h1M425 442.5h2M387 443.5h2M427 443.5h1M921 443.5h3M386 444.5h1M428 444.5h2M919 444.5h2M924 444.5h4M385 445.5h1M430 445.5h1M917 445.5h2M928 445.5h2M383 446.5h2M431 446.5h2M915 446.5h2M930 446.5h1M381 447.5h2M433 447.5h2M912 447.5h3M930 447.5h1M377 448.5h4M435 448.5h1M896 448.5h4M910 448.5h2M931 448.5h1M373 449.5h4M436 449.5h2M893 449.5h3M900 449.5h4M907 449.5h3M931 449.5h1M369 450.5h4M438 450.5h2M890 450.5h3M904 450.5h3M932 450.5h1M365 451.5h4M440 451.5h2M888 451.5h2M932 451.5h1M361 452.5h4M442 452.5h2M887 452.5h1M933 452.5h1M358 453.5h3M444 453.5h2M886 453.5h1M933 453.5h1M356 454.5h2M446 454.5h3M885 454.5h1M934 454.5h1M355 455.5h1M449 455.5h4M883 455.5h2M934 455.5h1M353 456.5h2M453 456.5h4M882 456.5h1M935 456.5h1M352 457.5h1M457 457.5h4M881 457.5h1M935 457.5h1M350 458.5h2M461 458.5h4M880 458.5h1M936 458.5h1M84 459.5h1M340 459.5h10M465 459.5h4M879 459.5h1M936 459.5h1M82 460.5h2M85 460.5h1M336 460.5h4M469 460.5h6M877 460.5h2M937 460.5h1M80 461.5h2M86 461.5h1M333 461.5h3M475 461.5h6M876 461.5h1M938 461.5h1M78 462.5h2M87 462.5h1M332 462.5h1M481 462.5h4M875 462.5h1M939 462.5h1M76 463.5h2M88 463.5h1M330 463.5h2M485 463.5h6M873 463.5h2M940 463.5h1M75 464.5h1M89 464.5h1M329 464.5h1M491 464.5h5M872 464.5h1M941 464.5h1M74 465.5h1M90 465.5h1M107 465.5h3M328 465.5h1M496 465.5h3M870 465.5h2M941 465.5h1M73 466.5h1M91 466.5h1M105 466.5h2M110 466.5h3M326 466.5h2M499 466.5h2M868 466.5h2M942 466.5h1M72 467.5h1M92 467.5h5M102 467.5h3M113 467.5h2M325 467.5h1M501 467.5h2M866 467.5h2M943 467.5h1M71 468.5h1M97 468.5h5M115 468.5h3M323 468.5h2M503 468.5h2M864 468.5h2M944 468.5h1M70 469.5h1M118 469.5h3M322 469.5h1M505 469.5h2M863 469.5h1M945 469.5h3M69 470.5h1M121 470.5h2M320 470.5h2M507 470.5h1M863 470.5h1M948 470.5h4M68 471.5h1M123 471.5h2M318 471.5h2M508 471.5h2M862 471.5h1M952 471.5h6M67 472.5h1M125 472.5h1M317 472.5h1M510 472.5h1M861 472.5h1M958 472.5h5M66 473.5h1M126 473.5h1M316 473.5h1M511 473.5h1M860 473.5h1M963 473.5h2M65 474.5h1M126 474.5h1M315 474.5h1M512 474.5h1M824 474.5h2M860 474.5h1M965 474.5h2M64 475.5h1M127 475.5h1M314 475.5h1M513 475.5h2M822 475.5h2M826 475.5h2M859 475.5h1M967 475.5h2M974 475.5h5M63 476.5h1M128 476.5h1M212 476.5h2M313 476.5h1M515 476.5h1M820 476.5h2M828 476.5h2M858 476.5h1M969 476.5h5M979 476.5h3M62 477.5h1M129 477.5h1M208 477.5h4M214 477.5h1M312 477.5h1M516 477.5h1M818 477.5h2M830 477.5h2M837 477.5h8M857 477.5h1M982 477.5h2M990 477.5h6M61 478.5h1M130 478.5h1M205 478.5h3M215 478.5h1M311 478.5h1M517 478.5h1M816 478.5h2M832 478.5h5M845 478.5h8M857 478.5h1M984 478.5h6M996 478.5h4M60 479.5h1M130 479.5h1M203 479.5h2M216 479.5h1M310 479.5h1M518 479.5h1M815 479.5h1M853 479.5h4M1000 479.5h2M59 480.5h1M131 480.5h1M202 480.5h1M217 480.5h1M309 480.5h1M519 480.5h1M814 480.5h1M1002 480.5h2M58 481.5h1M132 481.5h1M200 481.5h2M217 481.5h1M308 481.5h1M520 481.5h1M814 481.5h1M1004 481.5h1M58 482.5h1M133 482.5h1M198 482.5h2M218 482.5h1M307 482.5h1M521 482.5h2M813 482.5h1M1005 482.5h1M1030 482.5h5M57 483.5h1M134 483.5h1M197 483.5h1M219 483.5h1M306 483.5h1M523 483.5h1M812 483.5h1M1006 483.5h2M1025 483.5h5M1035 483.5h3M56 484.5h1M135 484.5h1M196 484.5h1M220 484.5h1M305 484.5h1M524 484.5h1M811 484.5h1M1008 484.5h1M1023 484.5h2M1038 484.5h2M55 485.5h1M136 485.5h1M194 485.5h2M221 485.5h1M304 485.5h1M525 485.5h1M810 485.5h1M1009 485.5h3M1021 485.5h2M1040 485.5h2M54 486.5h1M136 486.5h1M193 486.5h1M222 486.5h1M303 486.5h1M526 486.5h2M810 486.5h1M1012 486.5h4M1019 486.5h2M4 487.5h9M54 487.5h1M137 487.5h1M192 487.5h1M223 487.5h1M302 487.5h1M528 487.5h2M809 487.5h1M1016 487.5h3M13 488.5h1M53 488.5h1M138 488.5h1M190 488.5h2M224 488.5h1M301 488.5h1M530 488.5h2M808 488.5h1M14 489.5h1M52 489.5h1M139 489.5h1M189 489.5h1M225 489.5h1M300 489.5h1M532 489.5h2M807 489.5h1M15 490.5h1M50 490.5h2M140 490.5h1M188 490.5h1M225 490.5h1M300 490.5h1M534 490.5h1M807 490.5h1M16 491.5h1M49 491.5h1M141 491.5h2M187 491.5h1M226 491.5h1M299 491.5h1M535 491.5h1M806 491.5h1M17 492.5h1M47 492.5h2M143 492.5h1M186 492.5h1M227 492.5h1M299 492.5h1M535 492.5h1M806 492.5h1M18 493.5h1M45 493.5h2M144 493.5h1M184 493.5h2M228 493.5h1M298 493.5h1M536 493.5h1M805 493.5h1M19 494.5h1M41 494.5h4M145 494.5h2M183 494.5h1M229 494.5h1M298 494.5h1M537 494.5h1M805 494.5h1M20 495.5h3M35 495.5h6M147 495.5h1M182 495.5h1M230 495.5h1M297 495.5h1M538 495.5h1M804 495.5h1M23 496.5h4M31 496.5h4M148 496.5h2M180 496.5h2M231 496.5h1M296 496.5h1M538 496.5h1M804 496.5h1M27 497.5h4M150 497.5h3M178 497.5h2M231 497.5h1M296 497.5h1M539 497.5h1M803 497.5h1M153 498.5h2M176 498.5h2M232 498.5h1M295 498.5h1M540 498.5h1M803 498.5h1M155 499.5h14M174 499.5h2M233 499.5h1M295 499.5h1M541 499.5h1M802 499.5h1M169 500.5h5M234 500.5h1M294 500.5h1M541 500.5h1M802 500.5h1M235 501.5h1M294 501.5h1M542 501.5h1M801 501.5h1M235 502.5h1M293 502.5h1M543 502.5h1M801 502.5h1M236 503.5h1M292 503.5h1M544 503.5h1M800 503.5h1M237 504.5h1M291 504.5h1M545 504.5h1M799 504.5h1M238 505.5h1M290 505.5h1M546 505.5h1M798 505.5h1M239 506.5h1M289 506.5h1M547 506.5h1M797 506.5h1M239 507.5h1M289 507.5h1M547 507.5h1M796 507.5h1M240 508.5h1M288 508.5h1M548 508.5h1M796 508.5h1M241 509.5h1M287 509.5h1M549 509.5h1M795 509.5h1M242 510.5h1M286 510.5h1M550 510.5h1M794 510.5h1M243 511.5h1M285 511.5h1M551 511.5h1M793 511.5h1M243 512.5h1M284 512.5h1M552 512.5h1M792 512.5h1M244 513.5h1M282 513.5h2M553 513.5h1M791 513.5h1M245 514.5h10M281 514.5h1M554 514.5h2M790 514.5h1M255 515.5h2M280 515.5h1M556 515.5h1M790 515.5h1M257 516.5h2M278 516.5h2M557 516.5h1M789 516.5h1M259 517.5h2M277 517.5h1M558 517.5h1M788 517.5h1M261 518.5h2M275 518.5h2M559 518.5h1M787 518.5h1M263 519.5h3M273 519.5h2M560 519.5h2M786 519.5h1M266 520.5h2M271 520.5h2M562 520.5h2M786 520.5h1M268 521.5h3M564 521.5h1M785 521.5h1M565 522.5h2M784 522.5h1M567 523.5h1M783 523.5h1M568 524.5h1M783 524.5h1M569 525.5h1M782 525.5h1M570 526.5h1M782 526.5h1M571 527.5h1M781 527.5h1M572 528.5h1M781 528.5h1M573 529.5h1M780 529.5h1M574 530.5h1M780 530.5h1M575 531.5h1M779 531.5h1M576 532.5h1M779 532.5h1M577 533.5h1M778 533.5h1M578 534.5h1M778 534.5h1M579 535.5h1M777 535.5h1M580 536.5h1M777 536.5h1M581 537.5h1M776 537.5h1M582 538.5h1M776 538.5h1M583 539.5h1M775 539.5h1M584 540.5h2M774 540.5h1M586 541.5h1M774 541.5h1M587 542.5h1M773 542.5h1M588 543.5h2M772 543.5h1M590 544.5h1M771 544.5h1M591 545.5h3M770 545.5h1M594 546.5h4M770 546.5h1M598 547.5h2M769 547.5h1M600 548.5h2M768 548.5h1M602 549.5h1M767 549.5h1M603 550.5h1M767 550.5h1M604 551.5h2M766 551.5h1M606 552.5h1M765 552.5h1M607 553.5h1M765 553.5h1M608 554.5h2M764 554.5h1M610 555.5h1M763 555.5h1M611 556.5h1M763 556.5h1M612 557.5h2M762 557.5h1M614 558.5h1M761 558.5h1M615 559.5h2M761 559.5h1M617 560.5h2M760 560.5h1M619 561.5h2M759 561.5h1M621 562.5h2M759 562.5h1M623 563.5h1M758 563.5h1M624 564.5h2M757 564.5h1M626 565.5h2M757 565.5h1M628 566.5h1M756 566.5h1M629 567.5h2M755 567.5h1M631 568.5h1M755 568.5h1M632 569.5h1M754 569.5h1M633 570.5h1M753 570.5h1M634 571.5h1M753 571.5h1M635 572.5h1M752 572.5h1M636 573.5h1M751 573.5h1M637 574.5h1M751 574.5h1M638 575.5h1M750 575.5h1M639 576.5h1M750 576.5h1M640 577.5h2M749 577.5h1M642 578.5h2M748 578.5h1M644 579.5h1M748 579.5h1M645 580.5h2M747 580.5h1M647 581.5h1M746 581.5h1M648 582.5h1M746 582.5h1M649 583.5h1M745 583.5h1M650 584.5h1M745 584.5h1M651 585.5h1M744 585.5h1M652 586.5h1M743 586.5h1M653 587.5h1M742 587.5h1M654 588.5h1M741 588.5h1M655 589.5h1M740 589.5h1M656 590.5h2M739 590.5h1M658 591.5h2M738 591.5h1M660 592.5h1M737 592.5h1M661 593.5h2M736 593.5h1M663 594.5h1M734 594.5h2M664 595.5h2M732 595.5h2M666 596.5h1M730 596.5h2M667 597.5h1M727 597.5h3M668 598.5h2M725 598.5h2M670 599.5h1M722 599.5h3M671 600.5h2M708 600.5h14M673 601.5h2M702 601.5h6M675 602.5h2M700 602.5h2M677 603.5h2M697 603.5h3M679 604.5h18" fill="none" stroke="#ff0000" stroke-width="1"/>
<path d="M405 437.5h14M401 438.5h4M419 438.5h4M395 439.5h6M423 439.5h2M390 440.5h5M425 440.5h2M388 441.5h2M427 441.5h1M386 442.5h2M428 442.5h2M384 443.5h2M430 443.5h1M379 444.5h5M431 444.5h2M373 445.5h6M433 445.5h1M371 446.5h2M434 446.5h1M368 447.5h3M435 447.5h2M84 448.5h2M365 448.5h3M437 448.5h1M82 449.5h2M86 449.5h2M361 449.5h4M438 449.5h1M81 450.5h1M88 450.5h2M107 450.5h3M358 450.5h3M439 450.5h2M79 451.5h2M90 451.5h2M103 451.5h4M110 451.5h3M356 451.5h2M441 451.5h2M77 452.5h2M92 452.5h11M113 452.5h2M354 452.5h2M443 452.5h1M76 453.5h1M115 453.5h4M352 453.5h2M444 453.5h2M74 454.5h2M119 454.5h4M350 454.5h2M446 454.5h3M73 455.5h1M123 455.5h2M340 455.5h10M449 455.5h4M71 456.5h2M125 456.5h1M336 456.5h4M453 456.5h3M69 457.5h2M126 457.5h1M333 457.5h3M456 457.5h3M68 458.5h1M127 458.5h2M332 458.5h1M459 458.5h2M67 459.5h1M129 459.5h1M331 459.5h1M461 459.5h4M65 460.5h2M130 460.5h1M330 460.5h1M465 460.5h4M928 460.5h2M64 461.5h1M131 461.5h1M328 461.5h2M469 461.5h6M924 461.5h4M930 461.5h1M63 462.5h1M132 462.5h1M327 462.5h1M475 462.5h8M921 462.5h3M930 462.5h1M61 463.5h2M133 463.5h1M326 463.5h1M483 463.5h6M920 463.5h1M931 463.5h1M60 464.5h1M134 464.5h1M325 464.5h1M489 464.5h4M919 464.5h1M931 464.5h1M59 465.5h1M135 465.5h2M323 465.5h2M493 465.5h3M918 465.5h1M932 465.5h1M58 466.5h1M137 466.5h1M212 466.5h2M321 466.5h2M496 466.5h3M917 466.5h1M933 466.5h1M57 467.5h1M138 467.5h1M208 467.5h4M214 467.5h1M319 467.5h2M499 467.5h2M916 467.5h1M933 467.5h1M56 468.5h1M139 468.5h1M204 468.5h4M214 468.5h1M317 468.5h2M501 468.5h2M915 468.5h1M934 468.5h1M56 469.5h1M140 469.5h1M202 469.5h2M215 469.5h1M316 469.5h1M503 469.5h2M914 469.5h1M935 469.5h1M55 470.5h1M141 470.5h2M199 470.5h3M216 470.5h1M315 470.5h1M505 470.5h2M913 470.5h1M935 470.5h1M54 471.5h1M143 471.5h2M197 471.5h2M216 471.5h1M314 471.5h1M507 471.5h1M912 471.5h1M936 471.5h1M53 472.5h1M145 472.5h1M195 472.5h2M217 472.5h1M313 472.5h1M508 472.5h2M911 472.5h1M936 472.5h1M52 473.5h1M146 473.5h2M193 473.5h2M218 473.5h1M312 473.5h1M510 473.5h1M910 473.5h1M937 473.5h1M50 474.5h2M148 474.5h2M191 474.5h2M218 474.5h1M311 474.5h1M511 474.5h1M909 474.5h1M938 474.5h1M48 475.5h2M150 475.5h3M189 475.5h2M219 475.5h1M310 475.5h1M512 475.5h1M908 475.5h1M939 475.5h1M46 476.5h2M153 476.5h2M187 476.5h2M220 476.5h1M309 476.5h1M513 476.5h2M907 476.5h1M940 476.5h2M1032 476.5h10M9 477.5h4M41 477.5h5M155 477.5h3M185 477.5h2M220 477.5h1M308 477.5h1M515 477.5h1M906 477.5h1M942 477.5h1M1028 477.5h4M4 478.5h5M13 478.5h2M35 478.5h6M158 478.5h3M183 478.5h2M221 478.5h1M306 478.5h2M516 478.5h1M904 478.5h2M943 478.5h1M998 478.5h4M1025 478.5h3M15 479.5h2M31 479.5h4M161 479.5h2M180 479.5h3M222 479.5h1M305 479.5h1M517 479.5h1M902 479.5h2M944 479.5h1M950 479.5h14M992 479.5h6M1002 479.5h2M1023 479.5h2M17 480.5h1M27 480.5h4M163 480.5h4M177 480.5h3M223 480.5h1M304 480.5h1M518 480.5h1M899 480.5h3M945 480.5h5M964 480.5h4M974 480.5h8M988 480.5h4M1004 480.5h2M1022 480.5h1M18 481.5h2M23 481.5h4M167 481.5h4M174 481.5h3M224 481.5h1M302 481.5h2M519 481.5h1M897 481.5h2M968 481.5h6M982 481.5h6M1006 481.5h1M1020 481.5h2M20 482.5h3M171 482.5h3M225 482.5h1M301 482.5h1M520 482.5h1M896 482.5h1M1007 482.5h2M1018 482.5h2M225 483.5h1M300 483.5h1M521 483.5h1M895 483.5h1M1009 483.5h9M226 484.5h1M300 484.5h1M522 484.5h1M894 484.5h1M227 485.5h1M299 485.5h1M523 485.5h1M892 485.5h2M228 486.5h1M299 486.5h1M524 486.5h1M891 486.5h1M229 487.5h1M298 487.5h1M525 487.5h1M890 487.5h1M230 488.5h1M298 488.5h1M526 488.5h2M889 488.5h1M230 489.5h1M297 489.5h1M528 489.5h2M888 489.5h1M231 490.5h1M296 490.5h1M530 490.5h2M887 490.5h1M232 491.5h1M296 491.5h1M532 491.5h2M887 491.5h1M233 492.5h1M295 492.5h1M534 492.5h1M886 492.5h1M233 493.5h1M295 493.5h1M535 493.5h1M886 493.5h1M234 494.5h1M294 494.5h1M536 494.5h1M885 494.5h1M235 495.5h1M294 495.5h1M537 495.5h1M884 495.5h1M236 496.5h1M293 496.5h1M538 496.5h1M884 496.5h1M236 497.5h1M292 497.5h1M538 497.5h1M883 497.5h1M237 498.5h1M291 498.5h1M539 498.5h1M882 498.5h1M238 499.5h1M291 499.5h1M540 499.5h1M882 499.5h1M238 500.5h1M290 500.5h1M541 500.5h1M881 500.5h1M239 501.5h1M289 501.5h1M542 501.5h1M881 501.5h1M240 502.5h1M288 502.5h1M543 502.5h1M880 502.5h1M241 503.5h1M287 503.5h1M544 503.5h1M879 503.5h1M241 504.5h1M287 504.5h1M545 504.5h1M879 504.5h1M242 505.5h1M286 505.5h1M546 505.5h1M878 505.5h1M243 506.5h1M285 506.5h1M547 506.5h1M878 506.5h1M244 507.5h1M283 507.5h2M548 507.5h1M877 507.5h1M244 508.5h1M282 508.5h1M549 508.5h1M877 508.5h1M245 509.5h5M280 509.5h2M550 509.5h1M876 509.5h1M250 510.5h5M278 510.5h2M551 510.5h2M875 510.5h1M255 511.5h2M277 511.5h1M553 511.5h2M875 511.5h1M257 512.5h2M275 512.5h2M555 512.5h2M874 512.5h1M259 513.5h2M274 513.5h1M557 513.5h2M874 513.5h1M261 514.5h3M272 514.5h2M559 514.5h1M873 514.5h1M264 515.5h4M270 515.5h2M560 515.5h2M873 515.5h1M268 516.5h2M562 516.5h2M872 516.5h1M564 517.5h1M871 517.5h1M565 518.5h2M870 518.5h1M567 519.5h2M869 519.5h1M569 520.5h2M868 520.5h1M571 521.5h2M868 521.5h1M573 522.5h2M867 522.5h1M575 523.5h2M866 523.5h1M577 524.5h3M620 524.5h13M865 524.5h1M580 525.5h2M612 525.5h8M633 525.5h3M864 525.5h1M582 526.5h6M596 526.5h16M636 526.5h2M816 526.5h10M863 526.5h1M588 527.5h8M638 527.5h6M814 527.5h2M826 527.5h2M862 527.5h1M644 528.5h5M812 528.5h2M828 528.5h2M861 528.5h1M649 529.5h3M810 529.5h2M830 529.5h2M860 529.5h1M652 530.5h2M808 530.5h2M832 530.5h5M860 530.5h1M654 531.5h2M807 531.5h1M837 531.5h8M859 531.5h1M656 532.5h2M805 532.5h2M845 532.5h6M858 532.5h1M658 533.5h2M804 533.5h1M851 533.5h4M857 533.5h1M660 534.5h1M803 534.5h1M855 534.5h2M661 535.5h2M801 535.5h2M663 536.5h2M799 536.5h2M665 537.5h2M795 537.5h4M667 538.5h2M792 538.5h3M669 539.5h2M790 539.5h2M671 540.5h1M788 540.5h2M672 541.5h2M786 541.5h2M674 542.5h2M784 542.5h2M676 543.5h1M783 543.5h1M677 544.5h2M782 544.5h1M679 545.5h1M781 545.5h1M680 546.5h2M780 546.5h1M682 547.5h2M780 547.5h1M684 548.5h1M779 548.5h1M685 549.5h2M778 549.5h1M687 550.5h2M777 550.5h1M689 551.5h3M776 551.5h1M692 552.5h2M774 552.5h2M694 553.5h6M773 553.5h1M700 554.5h5M771 554.5h2M705 555.5h3M769 555.5h2M708 556.5h2M768 556.5h1M710 557.5h3M766 557.5h2M713 558.5h2M764 558.5h2M715 559.5h2M762 559.5h2M717 560.5h2M760 560.5h2M719 561.5h2M759 561.5h1M721 562.5h2M757 562.5h2M723 563.5h2M756 563.5h1M725 564.5h1M755 564.5h1M726 565.5h2M753 565.5h2M728 566.5h2M752 566.5h1M730 567.5h2M750 567.5h2M732 568.5h2M749 568.5h1M734 569.5h2M747 569.5h2M736 570.5h5M745 570.5h2M741 571.5h4" fill="none" stroke="#ffff00" stroke-width="1"/>
<rect x="352" y="453" width="13" height="6" fill="#00ffff"/>
<rect x="360" y="451" width="13" height="8" fill="#00ffff"/>
<rect x="368" y="449" width="13" height="10" fill="#00ffff"/>
<rect x="376" y="447" width="13" height="12" fill="#00ffff"/>
<rect x="384" y="441" width="13" height="18" fill="#00ffff"/>
<rect x="392" y="441" width="13" height="18" fill="#00ffff"/>
<rect x="400" y="439" width="13" height="20" fill="#00ffff"/>
<rect x="408" y="439" width="13" height="20" fill="#00ffff"/>
<rect x="416" y="440" width="13" height="19" fill="#00ffff"/>
<rect x="424" y="445" width="13" height="14" fill="#00ffff"/>
<rect x="432" y="450" width="13" height="9" fill="#00ffff"/>
<rect x="440" y="454" width="13" height="5" fill="#00ffff"/>
<rect x="448" y="456" width="13" height="3" fill="#00ffff"/>
<rect x="882" y="451" width="13" height="8" fill="#00ffff"/>
<rect x="891" y="448" width="13" height="11" fill="#00ffff"/>
<rect x="899" y="450" width="13" height="9" fill="#00ffff"/>
<rect x="907" y="447" width="13" height="12" fill="#00ffff"/>
<rect x="915" y="443" width="13" height="16" fill="#00ffff"/>
<rect x="923" y="445" width="13" height="14" fill="#00ffff"/>
<rect x="665" y="594" width="13" height="7" fill="#ff00ff"/>
<rect x="673" y="594" width="13" height="11" fill="#ff00ff"/>
<rect x="681" y="594" width="13" height="11" fill="#ff00ff"/>
<rect x="689" y="594" width="13" height="11" fill="#ff00ff"/>
<rect x="697" y="594" width="13" height="8" fill="#ff00ff"/>
<rect x="705" y="594" width="13" height="7" fill="#ff00ff"/>
<rect x="714" y="594" width="13" height="7" fill="#ff00ff"/>
<rect x="722" y="594" width="13" height="4" fill="#ff00ff"/>
<rect x="4" y="615" width="1066" height="1" fill="#00ff00"/>
<rect x="4" y="626" width="1066" height="1" fill="#0000ff"/>
<rect x="319" y="467" width="1" height="1" fill="#fff"/>
<rect x="317" y="468" width="5" height="1" fill="#fff"/>
<rect x="319" y="469" width="1" height="1" fill="#fff"/>
<rect x="318" y="470" width="1" height="1" fill="#fff"/>
<rect x="320" y="470" width="1" height="1" fill="#fff"/>
<rect x="327" y="462" width="1" height="1" fill="#fff"/>
<rect x="325" y="463" width="5" height="1" fill="#fff"/>
<rect x="327" y="464" width="1" height="1" fill="#fff"/>
<rect x="326" y="465" width="1" height="1" fill="#fff"/>
<rect x="328" y="465" width="1" height="1" fill="#fff"/>
<rect x="335" y="456" width="1" height="1" fill="#fff"/>
<rect x="333" y="457" width="5" height="1" fill="#fff"/>
<rect x="335" y="458" width="1" height="1" fill="#fff"/>
<rect x="334" y="459" width="1" height="1" fill="#fff"/>
<rect x="336" y="459" width="1" height="1" fill="#fff"/>
<rect x="343" y="454" width="1" height="1" fill="#fff"/>
<rect x="341" y="455" width="5" height="1" fill="#fff"/>
<rect x="343" y="456" width="1" height="1" fill="#fff"/>
<rect x="342" y="457" width="1" height="1" fill="#fff"/>
<rect x="344" y="457" width="1" height="1" fill="#fff"/>
<rect x="360" y="448" width="1" height="1" fill="#fff"/>
<rect x="358" y="449" width="5" height="1" fill="#fff"/>
<rect x="360" y="450" width="1" height="1" fill="#fff"/>
<rect x="359" y="451" width="1" height="1" fill="#fff"/>
<rect x="361" y="451" width="1" height="1" fill="#fff"/>
<rect x="368" y="446" width="1" height="1" fill="#fff"/>
<rect x="366" y="447" width="5" height="1" fill="#fff"/>
<rect x="368" y="448" width="1" height="1" fill="#fff"/>
<rect x="367" y="449" width="1" height="1" fill="#fff"/>
<rect x="369" y="449" width="1" height="1" fill="#fff"/>
<rect x="376" y="442" width="1" height="1" fill="#fff"/>
<rect x="374" y="443" width="5" height="1" fill="#fff"/>
<rect x="376" y="444" width="1" height="1" fill="#fff"/>
<rect x="375" y="445" width="1" height="1" fill="#fff"/>
<rect x="377" y="445" width="1" height="1" fill="#fff"/>
<rect x="384" y="442" width="1" height="1" fill="#fff"/>
<rect x="382" y="443" width="5" height="1" fill="#fff"/>
<rect x="384" y="444" width="1" height="1" fill="#fff"/>
<rect x="383" y="445" width="1" height="1" fill="#fff"/>
<rect x="385" y="445" width="1" height="1" fill="#fff"/>
<rect x="392" y="436" width="1" height="1" fill="#fff"/>
<rect x="390" y="437" width="5" height="1" fill="#fff"/>
<rect x="392" y="438" width="1" height="1" fill="#fff"/>
<rect x="391" y="439" width="1" height="1" fill="#fff"/>
<rect x="393" y="439" width="1" height="1" fill="#fff"/>
<rect x="400" y="436" width="1" height="1" fill="#fff"/>
<rect x="398" y="437" width="5" height="1" fill="#fff"/>
<rect x="400" y="438" width="1" height="1" fill="#fff"/>
<rect x="399" y="439" width="1" height="1" fill="#fff"/>
<rect x="401" y="439" width="1" height="1" fill="#fff"/>
<rect x="408" y="433" width="1" height="1" fill="#fff"/>
<rect x="406" y="434" width="5" height="1" fill="#fff"/>
<rect x="408" y="435" width="1" height="1" fill="#fff"/>
<rect x="407" y="436" width="1" height="1" fill="#fff"/>
<rect x="409" y="436" width="1" height="1" fill="#fff"/>
<rect x="762" y="555" width="1" height="1" fill="#fff"/>
<rect x="760" y="556" width="5" height="1" fill="#fff"/>
<rect x="762" y="557" width="1" height="1" fill="#fff"/>
<rect x="761" y="558" width="1" height="1" fill="#fff"/>
<rect x="763" y="558" width="1" height="1" fill="#fff"/>
<rect x="995" y="472" width="1" height="1" fill="#fff"/>
<rect x="993" y="473" width="5" height="1" fill="#fff"/>
<rect x="995" y="474" width="1" height="1" fill="#fff"/>
<rect x="994" y="475" width="1" height="1" fill="#fff"/>
<rect x="996" y="475" width="1" height="1" fill="#fff"/>
</g>
<rect x="5.5" y="3.4" width="11" height="10.1" rx="2.2" fill="none" stroke="#868686" stroke-width="1"/>
<rect x="12" y="5.4" width="2.7" height="6.4" fill="#8c8c8c"/>
<text x="27.6" y="13.6" font-size="12.6" fill="#ffffff">分时</text>
<text y="13.6" font-size="12.6" fill="#ffffff"><tspan x="60.6">1</tspan><tspan x="67.1">分钟</tspan></text>
<text y="13.6" font-size="12.6" fill="#ffffff"><tspan x="99.6">5</tspan><tspan x="106.1">分钟</tspan></text>
<text y="13.6" font-size="12.6" fill="#ffffff"><tspan x="138.6" font-size="12">15</tspan><tspan x="151.6">分钟</tspan></text>
<text y="13.6" font-size="12.6" fill="#ffffff"><tspan x="184.6" font-size="12">30</tspan><tspan x="197.6">分钟</tspan></text>
<text y="13.6" font-size="12.6" fill="#ffffff"><tspan x="230.6" font-size="12">60</tspan><tspan x="243.6">分钟</tspan></text>
<text x="277.6" y="13.6" font-size="12.6" fill="#00ffff">日线</text>
<text x="311.6" y="13.6" font-size="12.6" fill="#ffffff">周线</text>
<text x="345.6" y="13.6" font-size="12.6" fill="#ffffff">月线</text>
<text x="378.6" y="13.6" font-size="12.6" fill="#ffffff">多周期</text>
<text x="422.6" y="13.6" font-size="12.6" fill="#ffffff">更多</text>
<path d="M450.8 4.5L455.8 9.5L450.8 14.5" fill="none" stroke="#e6e6e6" stroke-width="1"/>
<text x="810.6" y="13.6" font-size="12.6" fill="#ffffff">复权</text>
<text x="844.6" y="13.6" font-size="12.6" fill="#ffffff">叠加</text>
<text x="879.6" y="13.6" font-size="12.6" fill="#ffffff">多股</text>
<text x="914.6" y="13.6" font-size="12.6" fill="#ffffff">统计</text>
<text x="949.6" y="13.6" font-size="12.6" fill="#ffffff">画线</text>
<text x="1019.6" y="13.6" font-size="12.6" fill="#ffffff">标记</text>
<text x="1090.6" y="13.6" font-size="12.6" fill="#ffffff">返回</text>
<text x="987.6" y="13.3" font-size="12" fill="#ffffff">F10</text>
<text y="13.6" font-size="12.6" fill="#ffffff"><tspan x="1052.5" y="13.3" font-size="12">+</tspan><tspan x="1058.6" y="13.6">自选</tspan></text>
<text y="33.7" font-size="12.8" fill="#ffffff"><tspan x="2.8">南京高科</tspan><tspan x="52.6" y="33.3" font-size="12">(</tspan><tspan x="55.8" y="33.7">日线</tspan><tspan x="79.8" y="33.3" font-size="12">.</tspan><tspan x="82.8" y="33.7">前复权</tspan><tspan x="118.8" y="33.3" font-size="12">)</tspan></text>
<circle cx="133.7" cy="28.8" r="6" fill="#808080"/>
<path d="M130.5 27.5L133.7 30.7L136.9 27.5" fill="none" stroke="#141414" stroke-width="1.3"/>
<path d="M1042.5 24.5L1047.5 29.5L1042.5 34.5L1037.5 29.5Z" fill="none" stroke="#6e6e6e" stroke-width="1"/>
<rect x="1055.6" y="24.6" width="11" height="9.8" rx="2.2" fill="none" stroke="#868686" stroke-width="1"/>
<rect x="1062" y="26" width="3" height="7" fill="#8c8c8c"/>
<circle cx="8" cy="405.5" r="5.5" fill="#808080"/>
<path d="M5 404.3L8 407.3L11 404.3" fill="none" stroke="#141414" stroke-width="1.3"/>
<text x="18.2" y="410.5" font-size="12.8" letter-spacing="-0.9" fill="#ffffff">股朋指标网</text>
<text x="82.6" y="409.1" font-size="13" fill="#00ff00">ZBGS3: 49.38</text>
<text x="163.4" y="409.1" font-size="13" fill="#ff0000">ZBGS4: 66.62</text>
<text x="244.4" y="409.1" font-size="13" fill="#ffff00">ZBGS6: 71.45</text>
<text x="326" y="409.1" font-size="13" fill="#00ff00">ZBGS10:</text>
<text x="380" y="409.1" font-size="13" fill="#ff00ff">ZBGS12:</text>
<text x="434.5" y="409.1" font-size="13" fill="#00ff00">: 5.00</text>
<text x="469.5" y="409.1" font-size="13" fill="#c0c0c0">: 100.00</text>
<text x="518.2" y="410.5" font-size="12.8" fill="#0000ff">捉妖</text>
<text x="542.7" y="409.1" font-size="13" fill="#0000ff">: 0.00</text>
<text x="577.2" y="410.5" font-size="12.8" fill="#ff00ff">最高</text>
<text x="601.7" y="409.1" font-size="13" fill="#ff00ff">: -</text>
<rect x="115" y="630" width="1" height="17" fill="#900000"/>
<text x="117" y="643.2" font-size="12.6" fill="#d80000">9</text>
<rect x="292" y="630" width="1" height="17" fill="#900000"/>
<text x="294" y="643.2" font-size="12.6" fill="#d80000">10</text>
<rect x="429" y="630" width="1" height="17" fill="#900000"/>
<text x="431" y="643.2" font-size="12.6" fill="#d80000">11</text>
<rect x="590" y="630" width="1" height="17" fill="#900000"/>
<text x="592" y="643.2" font-size="12.6" fill="#d80000">12</text>
<rect x="936" y="630" width="1" height="17" fill="#900000"/>
<text x="938" y="643.2" font-size="12.6" fill="#d80000">2</text>
<text font-size="12.6" fill="#d80000"><tspan x="4" y="643.2">2025</tspan><tspan x="31.5" y="643.6" font-size="12">年</tspan></text>
<rect x="159" y="631" width="1" height="2" fill="#900000"/>
<rect x="204" y="631" width="1" height="2" fill="#900000"/>
<rect x="248" y="631" width="1" height="2" fill="#900000"/>
<rect x="326" y="631" width="1" height="2" fill="#900000"/>
<rect x="361" y="631" width="1" height="2" fill="#900000"/>
<rect x="395" y="631" width="1" height="2" fill="#900000"/>
<rect x="469" y="631" width="1" height="2" fill="#900000"/>
<rect x="510" y="631" width="1" height="2" fill="#900000"/>
<rect x="550" y="631" width="1" height="2" fill="#900000"/>
<rect x="636" y="631" width="1" height="2" fill="#900000"/>
<rect x="683" y="631" width="1" height="2" fill="#900000"/>
<rect x="730" y="631" width="1" height="2" fill="#900000"/>
<rect x="857" y="631" width="1" height="2" fill="#900000"/>
<rect x="896" y="631" width="1" height="2" fill="#900000"/>
<rect x="739" y="631" width="79" height="15" fill="#440082"/>
<rect x="739" y="631" width="1" height="15" fill="#900000"/>
<rect x="818" y="631" width="1" height="15" fill="#900000"/>
<text font-size="12.6" fill="#ffffff"><tspan x="740.8" y="643.2">2025/12/25/</tspan><tspan x="804.6" y="644" font-size="13.2">四</tspan></text>
<rect x="1" y="647" width="1" height="3" fill="#900000"/>
<rect x="42" y="647" width="1" height="3" fill="#900000"/>
<rect x="73" y="647" width="1" height="3" fill="#900000"/>
<rect x="115" y="647" width="1" height="3" fill="#900000"/>
<rect x="144" y="647" width="1" height="3" fill="#900000"/>
<rect x="177" y="647" width="1" height="3" fill="#900000"/>
<rect x="207" y="647" width="1" height="3" fill="#900000"/>
<rect x="241" y="647" width="1" height="3" fill="#900000"/>
<rect x="282" y="647" width="1" height="3" fill="#900000"/>
<rect x="308" y="647" width="1" height="3" fill="#900000"/>
<rect x="332" y="647" width="1" height="3" fill="#900000"/>
<rect x="364" y="647" width="1" height="3" fill="#900000"/>
<rect x="390" y="647" width="1" height="3" fill="#900000"/>
<rect x="422" y="647" width="1" height="3" fill="#900000"/>
<rect x="480" y="647" width="1" height="3" fill="#900000"/>
<rect x="508" y="647" width="1" height="3" fill="#900000"/>
<rect x="536" y="647" width="1" height="3" fill="#900000"/>
<rect x="568" y="647" width="1" height="3" fill="#900000"/>
<rect x="599" y="647" width="1" height="3" fill="#900000"/>
<rect x="628" y="647" width="1" height="3" fill="#900000"/>
<rect x="662" y="647" width="1" height="3" fill="#900000"/>
<rect x="696" y="647" width="1" height="3" fill="#900000"/>
<rect x="735" y="647" width="1" height="3" fill="#900000"/>
<rect x="766" y="647" width="1" height="3" fill="#900000"/>
<rect x="807" y="647" width="1" height="3" fill="#900000"/>
<rect x="839" y="647" width="1" height="3" fill="#900000"/>
<rect x="871" y="647" width="1" height="3" fill="#900000"/>
<rect x="8" y="649" width="1" height="1" fill="#e6e6e6"/>
<rect x="11" y="649" width="1" height="1" fill="#e6e6e6"/>
<rect x="16" y="649" width="1" height="1" fill="#e6e6e6"/>
<rect x="20" y="649" width="1" height="1" fill="#e6e6e6"/>
<rect x="51" y="649" width="1" height="1" fill="#e6e6e6"/>
<rect x="828" y="649" width="1" height="1" fill="#e6e6e6"/>
<rect x="845" y="649" width="1" height="1" fill="#00ffff"/>
<rect x="849" y="649" width="4" height="1" fill="#00ffff"/>
<rect x="857" y="649" width="9" height="1" fill="#00ffff"/>
<clipPath id="rs"><rect x="1122" y="0" width="8" height="650"/></clipPath>
<rect x="1122" y="25" width="8" height="1" fill="#900000"/>
<rect x="1122" y="45" width="8" height="1" fill="#900000"/>
<rect x="1122" y="142" width="8" height="1" fill="#900000"/>
<rect x="1122" y="239" width="8" height="1" fill="#900000"/>
<rect x="1122" y="336" width="8" height="1" fill="#900000"/>
<rect x="1122" y="397" width="8" height="1" fill="#900000"/>
<rect x="1122" y="418" width="8" height="1" fill="#900000"/>
<rect x="1122" y="436" width="8" height="1" fill="#900000"/>
<g clip-path="url(#rs)"><text x="1123.6" y="41.6" font-size="16" fill="#ffffff">委</text></g>
<g clip-path="url(#rs)"><text x="1123.6" y="60.8" font-size="16" fill="#ffffff">卖</text></g>
<g clip-path="url(#rs)"><text x="1123.6" y="80.2" font-size="16" fill="#ffffff">卖</text></g>
<g clip-path="url(#rs)"><text x="1123.6" y="99.6" font-size="16" fill="#ffffff">卖</text></g>
<g clip-path="url(#rs)"><text x="1123.6" y="119" font-size="16" fill="#ffffff">卖</text></g>
<g clip-path="url(#rs)"><text x="1123.6" y="138.4" font-size="16" fill="#ffffff">卖</text></g>
<g clip-path="url(#rs)"><text x="1123.6" y="157.8" font-size="16" fill="#ffffff">买</text></g>
<g clip-path="url(#rs)"><text x="1123.6" y="177.2" font-size="16" fill="#ffffff">买</text></g>
<g clip-path="url(#rs)"><text x="1123.6" y="196.6" font-size="16" fill="#ffffff">买</text></g>
<g clip-path="url(#rs)"><text x="1123.6" y="216" font-size="16" fill="#ffffff">买</text></g>
<g clip-path="url(#rs)"><text x="1123.6" y="235.4" font-size="16" fill="#ffffff">买</text></g>
<g clip-path="url(#rs)"><text x="1123.6" y="254.8" font-size="16" fill="#ffffff">现</text></g>
<g clip-path="url(#rs)"><text x="1123.6" y="274.2" font-size="16" fill="#ffffff">涨</text></g>
<g clip-path="url(#rs)"><text x="1123.6" y="293.6" font-size="16" fill="#ffffff">涨</text></g>
<g clip-path="url(#rs)"><text x="1123.6" y="313" font-size="16" fill="#ffffff">总</text></g>
<g clip-path="url(#rs)"><text x="1123.6" y="332.4" font-size="16" fill="#ffffff">外</text></g>
<g clip-path="url(#rs)"><text x="1123.6" y="352.6" font-size="16" fill="#ffffff">换</text></g>
<g clip-path="url(#rs)"><text x="1123.6" y="372.6" font-size="16" fill="#ffffff">净</text></g>
<g clip-path="url(#rs)"><text x="1123.6" y="392.6" font-size="16" fill="#ffffff">收</text></g>
<g clip-path="url(#rs)"><text x="1123.6" y="414.4" font-size="16" fill="#e6e600">自</text></g>
<g clip-path="url(#rs)"><text x="1124" y="433" font-size="14" fill="#ffffff">交</text></g>
<text x="1123.2" y="452.3" font-size="13" fill="#ffffff">1</text>
<text x="1123.2" y="470.1" font-size="13" fill="#ffffff">1</text>
<text x="1123.2" y="487.9" font-size="13" fill="#ffffff">1</text>
<text x="1123.2" y="505.7" font-size="13" fill="#ffffff">1</text>
<text x="1123.2" y="523.5" font-size="13" fill="#ffffff">1</text>
<text x="1123.2" y="541.3" font-size="13" fill="#ffffff">1</text>
<text x="1123.2" y="559.1" font-size="13" fill="#ffffff">1</text>
<text x="1123.2" y="576.9" font-size="13" fill="#ffffff">1</text>
<text x="1123.2" y="594.7" font-size="13" fill="#ffffff">1</text>
<rect x="971" y="600" width="159" height="50" fill="#3e3839"/>
<text x="1006.2" y="621.8" font-size="18" font-weight="bold" fill="#ffffff">指标公式网</text>
<text x="993.88" y="641.8" font-size="16" fill="#eef4ff">www.zbgs3.com</text></svg>
</body></html>
